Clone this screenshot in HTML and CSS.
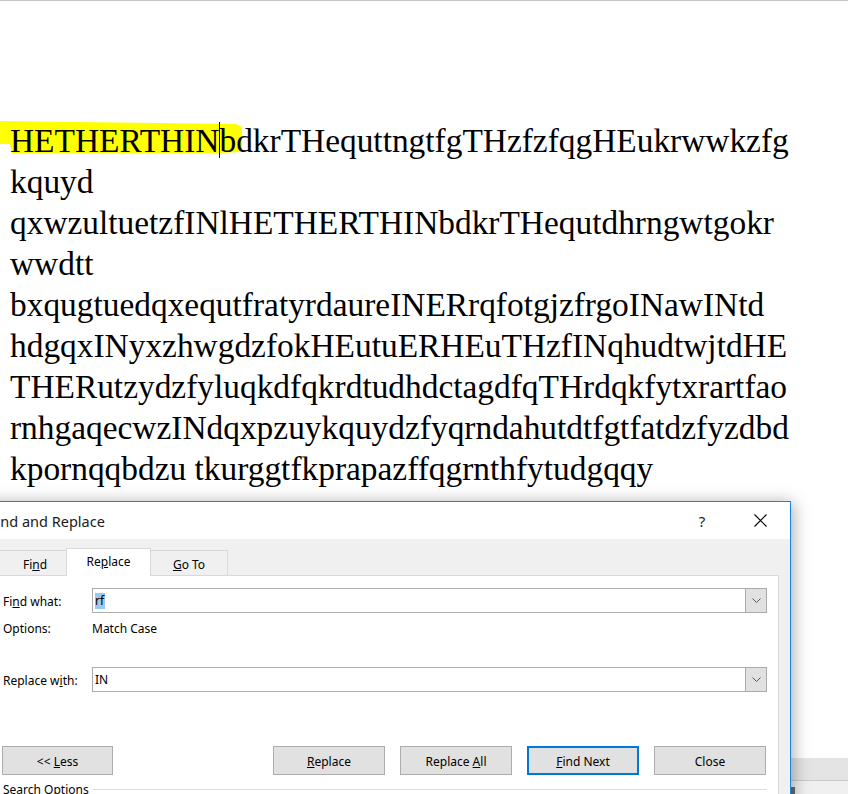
FILE: index.html
```html
<!DOCTYPE html>
<html>
<head>
<meta charset="utf-8">
<title>Find and Replace</title>
<link rel="stylesheet" href="styles.css">
</head>
<body>
<div class="screen">
  <div class="topline"></div>
  <svg class="hl" width="260" height="170" viewBox="0 0 260 170">
    <polygon points="0,121 236,124 242,127 242,152 220,153 12,153 10,144 0,144" fill="#ffff00"/>
  </svg>
  <div class="doc">
    <div class="ln">HETHERTHIN<span class="caret"></span>bdkrTHequttngtfgTHzfzfqgHEukrwwkzfg</div>
    <div class="ln">kquyd</div>
    <div class="ln">qxwzultuetzfINlHETHERTHINbdkrTHequtdhrngwtgokr</div>
    <div class="ln">wwdtt</div>
    <div class="ln">bxqugtuedqxequtfratyrdaureINERrqfotgjzfrgoINawINtd</div>
    <div class="ln">hdgqxINyxzhwgdzfokHEutuERHEuTHzfINqhudtwjtdHE</div>
    <div class="ln">THERutzydzfyluqkdfqkrdtudhdctagdfqTHrdqkfytxrartfao</div>
    <div class="ln">rnhgaqecwzINdqxpzuykquydzfyqrndahutdtfgtfatdzfyzdbd</div>
    <div class="ln">kpornqqbdzu tkurggtfkprapazffqgrnthfytudgqqy</div>
  </div>
  <div class="status"></div>
  <div class="bottom"><div class="thumb"></div></div>

  <div class="dialog">
    <div class="titlebar">
      <div class="title">Find and Replace</div>
      <div class="help">?</div>
      <div class="close">
        <svg width="13" height="13" viewBox="0 0 13 13"><path d="M0.5 0.5 L12.5 12.5 M12.5 0.5 L0.5 12.5" stroke="#000" stroke-width="1.1" fill="none"/></svg>
      </div>
    </div>
    <div class="tabs">
      <div class="tab t-find"><span>Fi<u>n</u>d</span></div>
      <div class="tab t-rep active"><span>Re<u>p</u>lace</span></div>
      <div class="tab t-go"><span><u>G</u>o To</span></div>
    </div>
    <div class="panel">
      <div class="row">
        <div class="label">Fi<u>n</u>d what:</div>
        <div class="combo">
          <div class="val"><span class="sel">rf</span></div>
          <div class="dd"><svg width="9" height="5" viewBox="0 0 9 5"><polyline points="0.5,0.5 4.5,4.5 8.5,0.5" fill="none" stroke="#555" stroke-width="1"/></svg></div>
        </div>
      </div>
      <div class="row opts">
        <div class="label">Options:</div>
        <div class="optval">Match Case</div>
      </div>
      <div class="row rep">
        <div class="label">Replace w<u>i</u>th:</div>
        <div class="combo">
          <div class="val">IN</div>
          <div class="dd"><svg width="9" height="5" viewBox="0 0 9 5"><polyline points="0.5,0.5 4.5,4.5 8.5,0.5" fill="none" stroke="#555" stroke-width="1"/></svg></div>
        </div>
      </div>
      <div class="buttons">
        <div class="btn less"><span>&lt;&lt; <u>L</u>ess</span></div>
        <div class="spacer"></div>
        <div class="btn"><span><u>R</u>eplace</span></div>
        <div class="btn"><span>Replace <u>A</u>ll</span></div>
        <div class="btn primary"><span><u>F</u>ind Next</span></div>
        <div class="btn"><span>Close</span></div>
      </div>
      <div class="search">
        <div class="stext">Search Options</div>
        <div class="sline"></div>
      </div>
    </div>
  </div>
</div>
</body>
</html>
```
FILE: styles.css
```css
html, body {
  margin: 0;
  padding: 0;
  background: #fff;
}
.screen {
  position: relative;
  width: 848px;
  height: 794px;
  overflow: hidden;
}
.topline {
  height: 1px;
  background: #c6c6c6;
}
.hl {
  position: absolute;
  left: 0;
  top: 0;
}
.doc {
  position: relative;
  height: 757px;
  box-sizing: border-box;
  padding: 119px 0 0 10px;
  font-family: "Liberation Serif", "Times New Roman", serif;
  font-size: 33.4px;
  line-height: 41px;
  color: #000;
}
.ln {
  white-space: nowrap;
}
.caret {
  display: inline-block;
  width: 1px;
  height: 36px;
  margin-right: -1px;
  background: #000;
  vertical-align: -6px;
}
.status {
  height: 22px;
  background: #e4e4e4;
  border-bottom: 1px solid #cbcbcb;
}
.bottom {
  height: 20px;
  background: #f0f0f0;
  padding: 6px 0 0 791px;
  box-sizing: border-box;
}
.thumb {
  width: 4px;
  height: 14px;
  background: #6d6d6d;
}

.dialog {
  position: absolute;
  left: -20px;
  top: 501px;
  width: 811px;
  height: 330px;
  box-sizing: border-box;
  border: 1px solid #1a86d9;
  background: #f0f0f0;
  box-shadow: 2px 2px 16px rgba(0, 0, 0, 0.35);
  font-family: "Noto Sans", "Open Sans", sans-serif;
  font-size: 12px;
  color: #000;
}
.titlebar {
  height: 37px;
  background: #fff;
  display: flex;
  align-items: center;
  padding-left: 8px;
}
.title {
  flex: 1;
  font-size: 14.5px;
  color: #1a1a1a;
}
.help {
  width: 30px;
  margin-right: 20px;
  text-align: center;
  font-size: 15px;
  color: #222;
}
.close {
  width: 46px;
  margin-right: 7px;
  display: flex;
  justify-content: center;
  align-items: center;
}
.tabs {
  height: 36px;
  box-sizing: border-box;
  padding-left: 16px;
  display: flex;
  align-items: flex-end;
  position: relative;
  z-index: 1;
}
.tab {
  height: 25px;
  box-sizing: border-box;
  border: 1px solid #d9d9d9;
  border-bottom: none;
  display: flex;
  align-items: center;
  justify-content: center;
  background: #f0f0f0;
  padding-top: 2px;
}
.t-find {
  width: 70px;
  padding-left: 6px;
}
.t-rep {
  width: 85px;
  margin-left: -1px;
}
.t-go {
  width: 78px;
  margin-left: -1px;
}
.tab.active {
  height: 28px;
  margin-bottom: -1px;
  background: #fff;
  padding-top: 0;
  padding-bottom: 3px;
}
.panel {
  margin: 0 11px 0 16px;
  height: 260px;
  box-sizing: border-box;
  background: #fff;
  border: 1px solid #d9d9d9;
  padding: 12px 11px 0 5px;
}
.row {
  display: flex;
  align-items: center;
  height: 25px;
}
.label {
  width: 89px;
  flex: none;
  padding-top: 1px;
}
.combo {
  flex: 1;
  height: 25px;
  box-sizing: border-box;
  border: 1px solid #ababab;
  background: #fff;
  display: flex;
}
.val {
  flex: 1;
  padding-left: 2px;
  line-height: 23px;
}
.sel {
  display: inline-block;
  background: #99c9ef;
  line-height: 16px;
  padding-right: 1px;
}
.dd {
  width: 20px;
  background: #e1e1e1;
  border-left: 1px solid #ababab;
  display: flex;
  align-items: center;
  justify-content: center;
}
.opts {
  margin-top: 7px;
  height: 16px;
}
.rep {
  margin-top: 31px;
}
.buttons {
  margin-top: 54px;
  display: flex;
  gap: 15px;
  height: 29px;
  padding-right: 1px;
}
.spacer {
  flex: 1;
}
.btn {
  width: 112px;
  height: 29px;
  box-sizing: border-box;
  border: 1px solid #adadad;
  background: #e1e1e1;
  display: flex;
  align-items: center;
  justify-content: center;
  padding-top: 1px;
}
.btn.less {
  margin-left: -1px;
  width: 111px;
}
.btn.primary {
  border: 2px solid #0078d7;
}
.search {
  margin-top: 6px;
  display: flex;
  align-items: center;
  height: 16px;
}
.stext {
  flex: none;
}
.sline {
  flex: 1;
  height: 1px;
  background: #dcdcdc;
  margin-left: 4px;
}
```
